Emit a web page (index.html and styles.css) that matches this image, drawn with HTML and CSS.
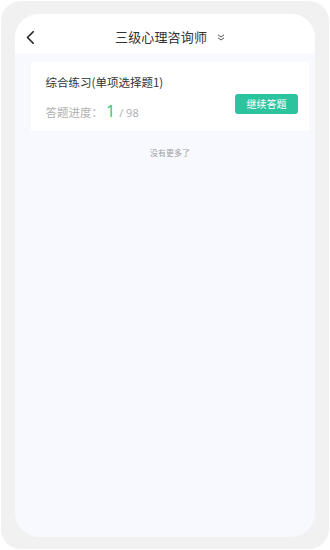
FILE: index.html
```html
<!DOCTYPE html>
<html lang="zh">
<head>
<meta charset="utf-8">
<title>三级心理咨询师</title>
<link rel="stylesheet" href="styles.css">
</head>
<body>
<div class="phone">
  <div class="screen">
    <div class="header">
      <span class="back">
        <svg width="9" height="13" viewBox="0 0 9 13"><polyline points="7.2,0.8 1.5,6.5 7.2,12.2" fill="none" stroke="#222" stroke-width="1.6" stroke-linecap="round" stroke-linejoin="round"/></svg>
      </span>
      <span class="title">三级心理咨询师</span>
      <span class="more">
        <svg width="8" height="7" viewBox="0 0 8 7"><polyline points="1,0.8 4,3 7,0.8" fill="none" stroke="#555" stroke-width="1"/><polyline points="1,3.8 4,6 7,3.8" fill="none" stroke="#555" stroke-width="1"/></svg>
      </span>
    </div>
    <div class="content">
      <div class="card">
        <div class="info">
          <div class="card-title">综合练习(单项选择题1)</div>
          <div class="progress"><span class="label">答题进度：</span><span class="cur">1</span><span class="total">/ 98</span></div>
        </div>
        <button class="btn">继续答题</button>
      </div>
      <div class="nomore">没有更多了</div>
    </div>
  </div>
</div>
</body>
</html>
```

FILE: styles.css
```css
* { box-sizing: border-box; }
html, body { margin: 0; padding: 0; background: #fff; }
body {
  font-family: "Noto Sans CJK SC", "Noto Sans", sans-serif;
  width: 330px;
  height: 550px;
  overflow: hidden;
}
.phone {
  margin: 1px;
  height: 548px;
  background: #f1f1f1;
  border-radius: 20px;
  padding: 13px 14px 12px 14px;
}
.screen {
  height: 100%;
  border-radius: 24px;
  overflow: hidden;
  background: #f8f9fe;
  display: flex;
  flex-direction: column;
}
.header {
  height: 39px;
  background: #fff;
  display: flex;
  align-items: center;
  padding-top: 7px;
  flex-shrink: 0;
}
.back {
  display: flex;
  margin-left: 11px;
  width: 9px;
}
.title {
  margin-left: 80px;
  font-size: 13px;
  line-height: 16px;
  color: #333;
  letter-spacing: 0.15px;
}
.more {
  display: flex;
  margin-left: 10px;
  margin-top: 1px;
}
.content {
  padding: 9px 6px 0 16px;
}
.card {
  background: #fff;
  height: 69px;
  display: flex;
  justify-content: space-between;
  padding: 12px 11px 10px 14px;
}
.info {
  display: flex;
  flex-direction: column;
}
.card-title {
  font-size: 11.5px;
  line-height: 16px;
  color: #333;
  padding-left: 0.5px;
}
.progress {
  margin-top: 10px;
  display: flex;
  align-items: baseline;
  height: 20px;
  color: #b0b0b0;
  padding-left: 0.5px;
}
.label { font-size: 11.5px; }
.cur {
  font-size: 16px;
  color: #2ec49f;
  margin-left: 3px;
  margin-right: 4px;
  font-family: "Noto Sans", sans-serif;
}
.total { font-size: 11px; font-family: "Noto Sans", sans-serif; }
.btn {
  align-self: flex-end;
  margin-bottom: 7px;
  width: 63px;
  height: 20px;
  border: 0;
  border-radius: 3px;
  background: #2dc39e;
  color: #fff;
  font-family: "Noto Sans CJK SC", sans-serif;
  font-size: 10px;
  padding: 0;
  line-height: 20px;
}
.nomore {
  text-align: center;
  font-size: 8px;
  line-height: 12px;
  color: #a0a0a0;
  margin-top: 16px;
}
```
